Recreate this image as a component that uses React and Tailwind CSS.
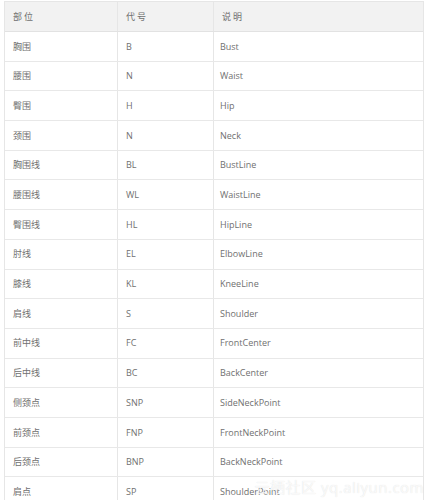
const rows = [
  ['胸围', 'B', 'Bust'],
  ['腰围', 'N', 'Waist'],
  ['臀围', 'H', 'Hip'],
  ['颈围', 'N', 'Neck'],
  ['胸围线', 'BL', 'BustLine'],
  ['腰围线', 'WL', 'WaistLine'],
  ['臀围线', 'HL', 'HipLine'],
  ['肘线', 'EL', 'ElbowLine'],
  ['膝线', 'KL', 'KneeLine'],
  ['肩线', 'S', 'Shoulder'],
  ['前中线', 'FC', 'FrontCenter'],
  ['后中线', 'BC', 'BackCenter'],
  ['侧颈点', 'SNP', 'SideNeckPoint'],
  ['前颈点', 'FNP', 'FrontNeckPoint'],
  ['后颈点', 'BNP', 'BackNeckPoint'],
  ['肩点', 'SP', 'ShoulderPoint'],
];

export default function App() {
  return (
    <div
      className="relative w-[428px] h-[500px] overflow-hidden bg-white pt-[1px] pl-[4px] text-[9px] text-[#707070]"
      style={{ fontFamily: '"Open Sans", "Noto Sans CJK SC", sans-serif' }}
    >
      <div className="w-[420px] border-l border-r border-t border-[#e6e6e6]">
        {/* Header */}
        <div className="flex h-[30px] bg-[#f2f2f2] border-b border-[#e2e2e2]">
          <div className="w-[112px] flex items-center pl-[8px] tracking-[2px]">部位</div>
          <div className="w-[96px] flex items-center pl-[8px] border-l border-[#e6e6e6] tracking-[2px]">代号</div>
          <div className="flex-1 flex items-center pl-[8px] border-l border-[#e6e6e6] tracking-[2px]">说明</div>
        </div>
        {rows.map(([part, code, desc]) => (
          <div key={part} className="flex h-[29.7px] border-b border-[#e8e8e8]">
            <div className="w-[112px] flex items-center pl-[8px]">{part}</div>
            <div className="w-[96px] flex items-center pl-[8px] border-l border-[#e6e6e6]">{code}</div>
            <div className="flex-1 flex items-center pl-[6px] border-l border-[#e6e6e6]">{desc}</div>
          </div>
        ))}
      </div>

      {/* watermark */}
      <div className="absolute right-[4px] bottom-[2px] text-[15px] text-white/80 tracking-[0.5px]"
        style={{ textShadow: '0 0 1px rgba(0,0,0,0.15)' }}>
        云栖社区 yq.aliyun.com
      </div>
    </div>
  );
}
